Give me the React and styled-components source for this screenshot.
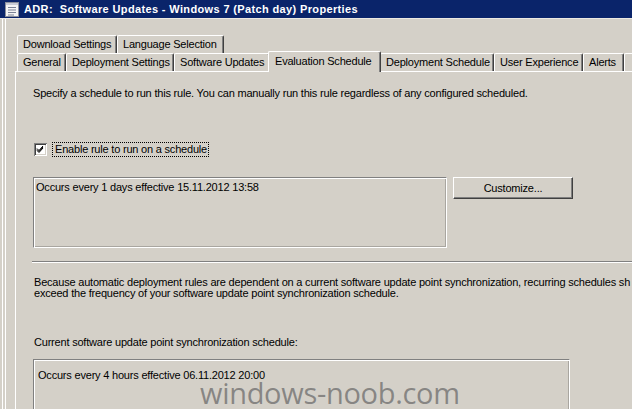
import styled, { createGlobalStyle } from 'styled-components';

const GlobalStyle = createGlobalStyle`
  html, body {
    margin: 0;
    padding: 0;
    background: #d4d0c8;
  }
  body {
    font-family: 'Liberation Sans', Arial, sans-serif;
    font-size: 11px;
    color: #000;
  }
`;

const topTabs = [
  { label: 'Download Settings', w: 100 },
  { label: 'Language Selection', w: 107 },
];

const bottomTabs = [
  { label: 'General', w: 49 },
  { label: 'Deployment Settings', w: 108 },
  { label: 'Software Updates', w: 96 },
  { label: 'Evaluation Schedule', w: 113, active: true },
  { label: 'Deployment Schedule', w: 114 },
  { label: 'User Experience', w: 89 },
  { label: 'Alerts', w: 41 },
  { label: '', w: 60 },
];

const DocIcon = () => (
  <svg width='14' height='15' viewBox='0 0 14 15'>
    <rect x='0.5' y='0.5' width='13' height='14' fill='#f4f4f4' stroke='#8a8f9c' />
    <rect x='1' y='1' width='12' height='2' fill='#c9ccd6' />
    <path d='M3 5.5h8M3 8h8M3 10.5h8M3 13h6' stroke='#7a8296' strokeWidth='1' />
  </svg>
);

const CheckMark = () => (
  <svg width='13' height='13' viewBox='0 0 13 13'>
    <rect x='0' y='0' width='13' height='13' fill='#808080' />
    <rect x='1' y='1' width='12' height='12' fill='#ffffff' />
    <rect x='1' y='1' width='11' height='11' fill='#404040' />
    <rect x='2' y='2' width='10' height='10' fill='#d4d0c8' />
    <rect x='2' y='2' width='9' height='9' fill='#ffffff' />
    <path d='M3 5.5l2 2 4-4.5M3 6.5l2 2 4-4.5M3 7.5l2 2 4-4.5' stroke='#000' strokeWidth='1' fill='none' />
  </svg>
);

const App = () => {
  return (
    <>
      <GlobalStyle />
      <Window>
        <TitleBar>
          <DocIcon />
          <Title>ADR:  Software Updates - Windows 7 (Patch day) Properties</Title>
        </TitleBar>
        <Client>
          <TabStrip>
            <TabRow>
              {topTabs.map(t => (
                <Tab key={t.label} $w={t.w}>
                  {t.label}
                </Tab>
              ))}
            </TabRow>
            <TabRow>
              {bottomTabs.map((t, i) => (
                <Tab key={i} $w={t.w} $active={t.active}>
                  {t.label}
                </Tab>
              ))}
            </TabRow>
          </TabStrip>
          <Panel>
            <Intro>
              Specify a schedule to run this rule. You can manually run this rule
              regardless of any configured scheduled.
            </Intro>
            <CheckRow>
              <CheckMark />
              <FocusLabel>Enable rule to run on a schedule</FocusLabel>
            </CheckRow>
            <ScheduleRow>
              <ReadBox $w={414} $h={71} $pad='3px 2px'>
                Occurs every 1 days effective 15.11.2012 13:58
              </ReadBox>
              <Button>Customize...</Button>
            </ScheduleRow>
            <Separator />
            <Paragraph>
              Because automatic deployment rules are dependent on a current software
              update point synchronization, recurring schedules sh
              <br />
              exceed the frequency of your software update point synchronization
              schedule.
            </Paragraph>
            <Caption>Current software update point synchronization schedule:</Caption>
            <ReadBox $w={537} $h={60} $pad='9px 4px' $top={11}>
              Occurs every 4 hours effective 06.11.2012 20:00
            </ReadBox>
          </Panel>
          <Watermark>windows-noob.com</Watermark>
        </Client>
      </Window>
    </>
  );
};

export default App;

const Window = styled.div`
  width: 632px;
  height: 409px;
  overflow: hidden;
  display: flex;
  flex-direction: column;
`;

const TitleBar = styled.div`
  height: 18px;
  flex: none;
  display: flex;
  align-items: center;
  gap: 5px;
  padding-left: 5px;
  background: #0a246a;
  svg {
    margin-top: 1px;
  }
`;

const Title = styled.span`
  color: #fff;
  font-weight: bold;
  font-size: 11px;
  white-space: pre;
  letter-spacing: 0.36px;
`;

const Client = styled.div`
  flex: 1;
  position: relative;
  padding: 15px 0 0 15px;
  border-top: 1px solid #ece9e2;
  box-shadow: inset 2px 0 0 #d4d0c8, inset 3px 0 0 #ffffff, inset 5px 0 0 #d4d0c8,
    inset 6px 0 0 #ffffff;
  display: flex;
  flex-direction: column;
`;

const TabStrip = styled.div`
  display: flex;
  flex-direction: column;
  padding-left: 2px;
`;

const TabRow = styled.div`
  display: flex;
  align-items: flex-end;
  height: 18px;
  &:first-child {
    height: 19px;
  }
`;

const Tab = styled.div`
  box-sizing: border-box;
  flex: none;
  width: ${p => p.$w}px;
  height: ${p => (p.$active ? 21 : 18)}px;
  margin: ${p => (p.$active ? '0 -1px -1px -2px' : '0')};
  position: relative;
  z-index: ${p => (p.$active ? 2 : 0)};
  padding: ${p => (p.$active ? '3px 0 0 6px' : '2px 0 0 5px')};
  white-space: nowrap;
  overflow: hidden;
  background: #d4d0c8;
  border-top: 1px solid #ffffff;
  border-left: 1px solid #ffffff;
  border-right: 1px solid #404040;
  border-radius: 2px 2px 0 0;
  box-shadow: inset -1px 0 0 #808080;
  letter-spacing: -0.2px;
`;

const Panel = styled.div`
  flex: 1;
  position: relative;
  z-index: 1;
  border-top: 1px solid #ffffff;
  border-left: 1px solid #ffffff;
  padding: 15px 0 0 17px;
  display: flex;
  flex-direction: column;
  align-items: flex-start;
  letter-spacing: -0.2px;
`;

const Intro = styled.p`
  margin: 0;
  line-height: 12px;
  white-space: nowrap;
`;

const CheckRow = styled.div`
  margin-top: 42px;
  margin-left: 1px;
  display: flex;
  align-items: center;
  gap: 5px;
  height: 16px;
  svg {
    display: block;
  }
`;

const FocusLabel = styled.span`
  border: 1px dotted #000;
  padding: 0 1px 0 2px;
  line-height: 13px;
`;

const ScheduleRow = styled.div`
  margin-top: 20px;
  display: flex;
  align-items: flex-start;
  gap: 6px;
`;

const ReadBox = styled.div`
  box-sizing: border-box;
  flex: none;
  width: ${p => p.$w}px;
  height: ${p => p.$h}px;
  margin-top: ${p => p.$top || 0}px;
  padding: ${p => p.$pad};
  line-height: 12px;
  border: 1px solid;
  border-color: #808080 #ffffff #ffffff #808080;
  box-shadow: inset 1px 1px 0 #ffffff, inset -1px -1px 0 #a9a6a0;
  white-space: nowrap;
`;

const Button = styled.button`
  box-sizing: border-box;
  width: 120px;
  height: 22px;
  padding: 0;
  font: inherit;
  letter-spacing: -0.2px;
  color: #000;
  background: #d4d0c8;
  border: 1px solid;
  border-color: #ffffff #404040 #404040 #ffffff;
  box-shadow: inset -1px -1px 0 #808080;
`;

const Separator = styled.div`
  align-self: stretch;
  margin: 13px 0 0 -1px;
  height: 1px;
  background: #808080;
  border-bottom: 1px solid #ffffff;
`;

const Paragraph = styled.p`
  margin: 14px 0 0 1px;
  line-height: 11px;
  white-space: nowrap;
`;

const Caption = styled.p`
  margin: 37px 0 0 1px;
  line-height: 12px;
  white-space: nowrap;
`;

const Watermark = styled.div`
  position: absolute;
  left: 200px;
  top: 359px;
  font-family: 'Open Sans', 'DejaVu Sans', sans-serif;
  font-size: 29px;
  line-height: 29px;
  letter-spacing: -0.3px;
  color: rgba(105, 105, 105, 0.72);
  pointer-events: none;
`;
